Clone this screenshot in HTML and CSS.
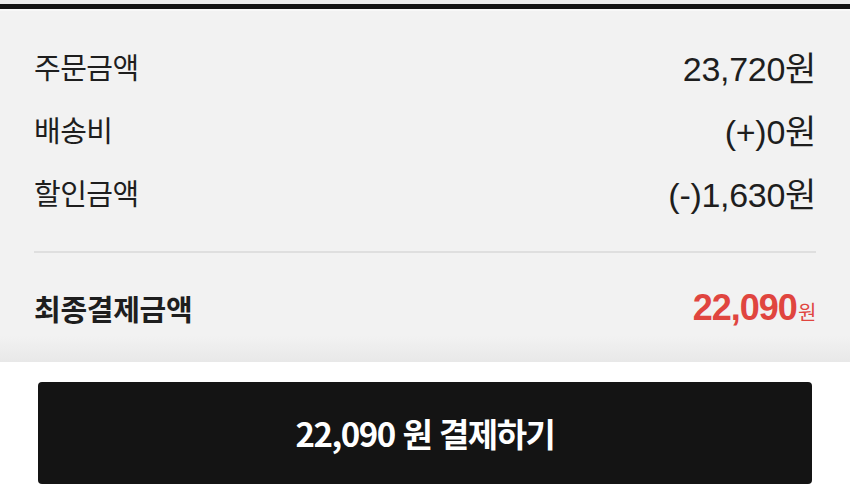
FILE: index.html
```html
<!DOCTYPE html>
<html lang="ko">
<head>
<meta charset="UTF-8" />
<meta name="viewport" content="width=device-width, initial-scale=1" />
<title>결제</title>
<link rel="stylesheet" href="styles.css">
</head>
<body>

<div class="topbar"></div>

<section class="summary">
  <div class="row">
    <span class="label">주문금액</span>
    <span class="value">23,720원</span>
  </div>
  <div class="row">
    <span class="label">배송비</span>
    <span class="value">(+)0원</span>
  </div>
  <div class="row">
    <span class="label">할인금액</span>
    <span class="value">(-)1,630원</span>
  </div>

  <hr class="divider" />

  <div class="row total">
    <span class="label">최종결제금액</span>
    <span class="value"><strong>22,090</strong><small>원</small></span>
  </div>
</section>

<button class="payBtn">22,090 원 결제하기</button>

</body>
</html>
```

FILE: styles.css
```css
body {
  margin: 0;
  background: #fff;
  font-family: "Noto Sans CJK KR", sans-serif;
  color: #1e1e1e;
}

.topbar {
  height: 4px;
  background: #ededed;
  border-bottom: 5px solid #141414;
}

.summary {
  padding: 35px 34px 34px;
  border-top: 2px solid #f8f8f8;
  background: linear-gradient(to bottom, #f2f2f2 calc(100% - 26px), #e8e8e8);
  display: flex;
  flex-direction: column;
  gap: 23px;
}

.row {
  display: flex;
  justify-content: space-between;
  align-items: center;
  height: 40px;
}
.label {
  font-size: 29px;
  letter-spacing: -0.5px;
}
.value {
  font-family: "Liberation Sans", "Noto Sans CJK KR", sans-serif;
  font-size: 34px;
  letter-spacing: -0.3px;
}

.divider {
  border: none;
  height: 2px;
  background: #dfdfdf;
  margin: 16px 0 12px;
}

.total .label {
  font-weight: bold;
  letter-spacing: -0.3px;
}
.total .value {
  color: #e0453f;
  display: flex;
  align-items: baseline;
}
.total strong {
  font-size: 36px;
  letter-spacing: -1px;
}
.total small {
  font-family: "Noto Sans CJK KR", sans-serif;
  font-size: 20px;
  margin-left: 1px;
}

.payBtn {
  display: block;
  width: calc(100% - 76px);
  height: 102px;
  margin: 20px 38px 0;
  background: #141414;
  border: none;
  border-radius: 4px;
  color: #fff;
  font-family: "Noto Sans CJK KR", sans-serif;
  font-size: 33px;
  font-weight: bold;
  letter-spacing: -1.5px;
  cursor: pointer;
}
```
